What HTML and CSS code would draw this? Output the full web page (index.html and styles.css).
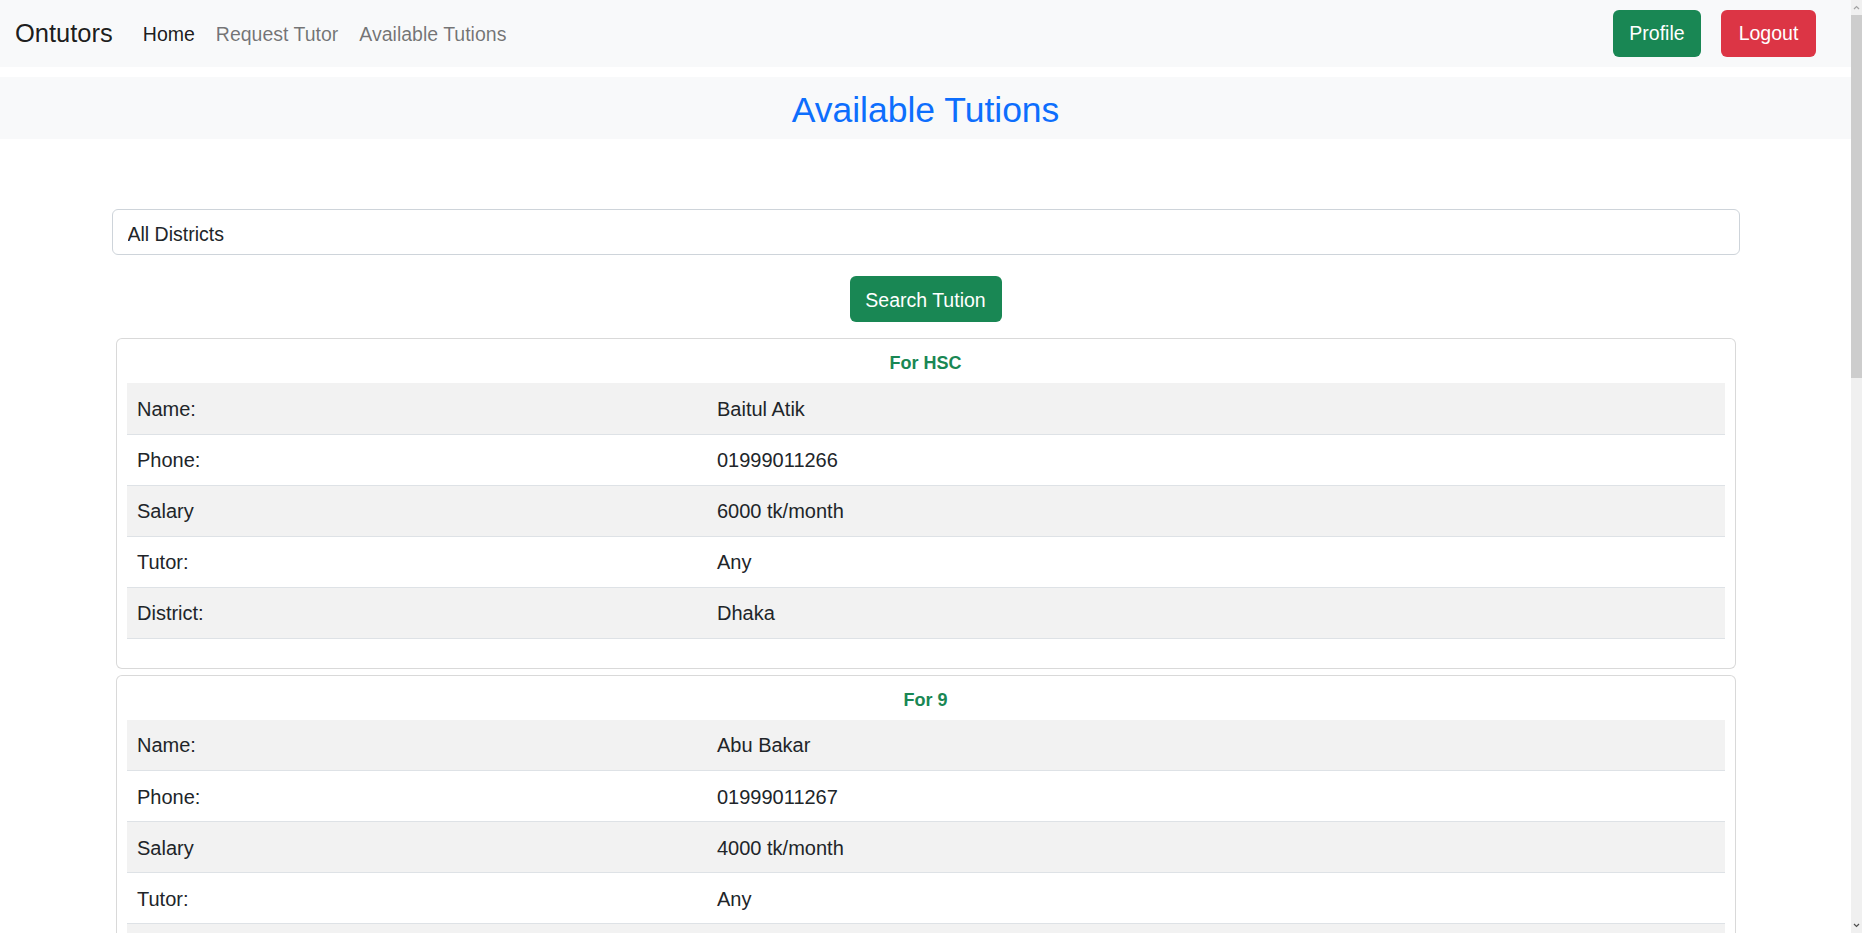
FILE: index.html
```html
<!DOCTYPE html>
<html lang="en">
<head>
<meta charset="utf-8">
<title>Ontutors - Available Tutions</title>
<link rel="stylesheet" href="styles.css">
</head>
<body>
<nav class="navbar">
  <a class="brand" href="#">Ontutors</a>
  <ul class="nav-links">
    <li><a class="nav-link active" href="#">Home</a></li>
    <li><a class="nav-link" href="#">Request Tutor</a></li>
    <li><a class="nav-link" href="#">Available Tutions</a></li>
  </ul>
  <div class="nav-actions">
    <a class="btn btn-success btn-profile" href="#">Profile</a>
    <a class="btn btn-danger btn-logout" href="#">Logout</a>
  </div>
</nav>

<header class="page-header">
  <h2 class="page-title">Available Tutions</h2>
</header>

<main class="content">
  <form class="search-form">
    <select class="form-control">
      <option>All Districts</option>
      <option>Dhaka</option>
      <option>Chattogram</option>
    </select>
    <button type="button" class="btn btn-success btn-search">Search Tution</button>
  </form>

  <section class="card">
    <h6 class="card-title">For HSC</h6>
    <table class="table">
      <tr><td class="label">Name:</td><td>Baitul Atik</td></tr>
      <tr><td class="label">Phone:</td><td>01999011266</td></tr>
      <tr><td class="label">Salary</td><td>6000 tk/month</td></tr>
      <tr><td class="label">Tutor:</td><td>Any</td></tr>
      <tr><td class="label">District:</td><td>Dhaka</td></tr>
    </table>
  </section>

  <section class="card">
    <h6 class="card-title">For 9</h6>
    <table class="table">
      <tr><td class="label">Name:</td><td>Abu Bakar</td></tr>
      <tr><td class="label">Phone:</td><td>01999011267</td></tr>
      <tr><td class="label">Salary</td><td>4000 tk/month</td></tr>
      <tr><td class="label">Tutor:</td><td>Any</td></tr>
      <tr><td class="label">District:</td><td>Dhaka</td></tr>
    </table>
  </section>

  <section class="card">
    <h6 class="card-title">For SSC</h6>
    <table class="table">
      <tr><td class="label">Name:</td><td>Rahim Uddin</td></tr>
      <tr><td class="label">Phone:</td><td>01999011268</td></tr>
      <tr><td class="label">Salary</td><td>5000 tk/month</td></tr>
      <tr><td class="label">Tutor:</td><td>Any</td></tr>
      <tr><td class="label">District:</td><td>Dhaka</td></tr>
    </table>
  </section>

  <section class="card">
    <h6 class="card-title">For 8</h6>
    <table class="table">
      <tr><td class="label">Name:</td><td>Karim Hasan</td></tr>
      <tr><td class="label">Phone:</td><td>01999011269</td></tr>
      <tr><td class="label">Salary</td><td>3500 tk/month</td></tr>
      <tr><td class="label">Tutor:</td><td>Any</td></tr>
      <tr><td class="label">District:</td><td>Dhaka</td></tr>
    </table>
  </section>

  <section class="card">
    <h6 class="card-title">For 10</h6>
    <table class="table">
      <tr><td class="label">Name:</td><td>Nusrat Jahan</td></tr>
      <tr><td class="label">Phone:</td><td>01999011270</td></tr>
      <tr><td class="label">Salary</td><td>4500 tk/month</td></tr>
      <tr><td class="label">Tutor:</td><td>Any</td></tr>
      <tr><td class="label">District:</td><td>Dhaka</td></tr>
    </table>
  </section>

  <section class="card">
    <h6 class="card-title">For HSC</h6>
    <table class="table">
      <tr><td class="label">Name:</td><td>Tanvir Ahmed</td></tr>
      <tr><td class="label">Phone:</td><td>01999011271</td></tr>
      <tr><td class="label">Salary</td><td>7000 tk/month</td></tr>
      <tr><td class="label">Tutor:</td><td>Any</td></tr>
      <tr><td class="label">District:</td><td>Dhaka</td></tr>
    </table>
  </section>
</main>

<div class="scrollbar" aria-hidden="true">
  <div class="scroll-btn">
    <svg width="11" height="15" viewBox="0 0 11 15"><path d="M3 9 L5.5 6.5 L8 9" fill="none" stroke="#a3a3a3" stroke-width="1.2"/></svg>
  </div>
  <div class="scroll-track">
    <div class="scroll-thumb"></div>
  </div>
  <div class="scroll-btn">
    <svg width="11" height="15" viewBox="0 0 11 15"><path d="M3 6 L5.5 8.5 L8 6" fill="none" stroke="#505050" stroke-width="1.2"/></svg>
  </div>
</div>
</body>
</html>
```

FILE: styles.css
```css
html {
  background: #fff;
}

body {
  margin: 0;
  padding-right: 11px;
  font-family: "Liberation Sans", Arial, sans-serif;
  font-size: 19.5px;
  line-height: 1.5;
  color: #212529;
  background: #fff;
}

a {
  text-decoration: none;
}

/* Fake window scrollbar (overlay on the right edge) */
.scrollbar {
  position: fixed;
  top: 0;
  right: 0;
  width: 11px;
  height: 100vh;
  display: flex;
  flex-direction: column;
  background: #f0f0f0;
}

.scroll-btn {
  height: 15px;
  flex: none;
}

.scroll-btn svg {
  display: block;
}

.scroll-track {
  flex: 1;
}

.scroll-thumb {
  height: 363px;
  background: #cdcdcd;
}

/* Navbar */
.navbar {
  display: flex;
  align-items: center;
  height: 67px;
  padding: 0 35px 0 15px;
  background: #f8f9fa;
}

.brand {
  font-size: 25.5px;
  color: rgba(0, 0, 0, 0.9);
  line-height: 1;
  margin-right: 20px;
}

.nav-links {
  display: flex;
  list-style: none;
  margin: 0;
  padding: 0;
  gap: 1px;
}

.nav-link {
  display: block;
  padding: 0 10px;
  color: rgba(0, 0, 0, 0.55);
  line-height: 28px;
}

.nav-link.active {
  color: rgba(0, 0, 0, 0.9);
}

.nav-actions {
  margin-left: auto;
  display: flex;
  gap: 20px;
}

.btn {
  display: inline-flex;
  align-items: center;
  justify-content: center;
  height: 47px;
  padding: 0 16.5px;
  border: 0;
  border-radius: 6px;
  color: #fff;
  font-family: inherit;
  font-size: 19.5px;
  line-height: 1;
  cursor: pointer;
}

.btn-profile {
  width: 88px;
  padding: 0;
}

.btn-logout {
  width: 95px;
  padding: 0;
}

.btn-success {
  background: #198754;
}

.btn-danger {
  background: #dc3545;
}

/* Header */
.page-header {
  margin-top: 10px;
  height: 62px;
  background: #f8f9fa;
  display: flex;
  align-items: center;
  justify-content: center;
}

.page-title {
  margin: 0;
  font-size: 35.5px;
  font-weight: 400;
  line-height: 1;
  color: #0d6efd;
  padding-top: 5px;
}

/* Content */
.content {
  width: 1628px;
  margin: 70px auto 0;
}

.search-form {
  display: flex;
  flex-direction: column;
  align-items: center;
}

.form-control {
  -webkit-appearance: none;
  appearance: none;
  display: block;
  width: 100%;
  height: 46px;
  padding: 3px 15px 0;
  border: 1px solid #ced4da;
  border-radius: 6px;
  background: #fff;
  font-family: inherit;
  font-size: 19.5px;
  color: #212529;
  outline: none;
}

.btn-search {
  margin-top: 21px;
  height: 46px;
  width: 152px;
  padding: 3px 0 0;
}

.card {
  margin: 16px 4px 0;
  padding: 10px;
  border: 1px solid rgba(0, 0, 0, 0.15);
  border-radius: 6px;
  background: #fff;
}

.card + .card {
  margin-top: 6px;
}

.card-title {
  margin: 0 0 8px;
  padding-top: 2px;
  text-align: center;
  font-size: 18px;
  font-weight: 700;
  line-height: 24px;
  color: #198754;
}

.table {
  width: 100%;
  border-collapse: collapse;
  margin-bottom: 19px;
  font-size: 20px;
}

.table td {
  height: 51px;
  padding: 1px 10.5px 0;
  border-bottom: 1px solid #dee2e6;
  vertical-align: middle;
  box-sizing: border-box;
}

.table td.label {
  width: 580px;
}

.table tr:nth-child(odd) td {
  background: #f2f2f2;
}
```
